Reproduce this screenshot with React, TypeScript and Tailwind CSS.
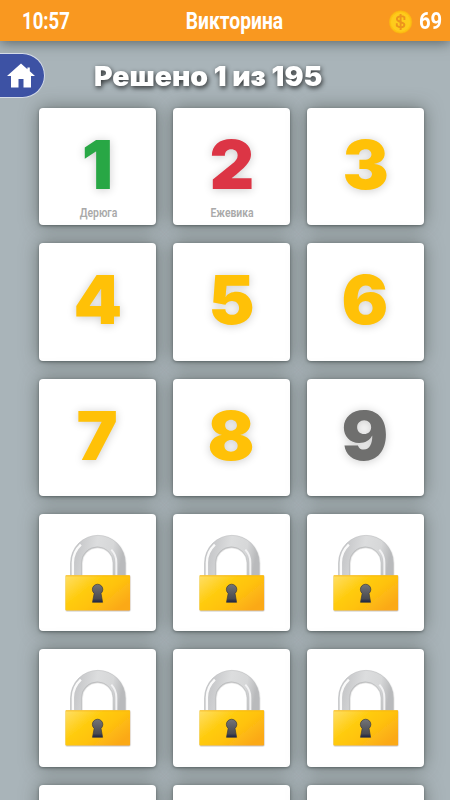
import React from 'react';

type Status = 'solved' | 'failed' | 'open' | 'next' | 'locked';

interface Level {
  id: number;
  status: Status;
  answer?: string;
}

const LEVELS: Level[] = [
  { id: 1, status: 'solved', answer: 'Дерюга' },
  { id: 2, status: 'failed', answer: 'Ежевика' },
  { id: 3, status: 'open' },
  { id: 4, status: 'open' },
  { id: 5, status: 'open' },
  { id: 6, status: 'open' },
  { id: 7, status: 'open' },
  { id: 8, status: 'open' },
  { id: 9, status: 'next' },
  ...Array.from({ length: 9 }, (_, i): Level => ({ id: 10 + i, status: 'locked' })),
];

const COLORS: Record<Status, string> = {
  solved: 'text-[#28a745]',
  failed: 'text-[#dc3545]',
  open: 'text-[#ffc107]',
  next: 'text-[#6f6f6e]',
  locked: '',
};

const LockIcon: React.FC = () => (
  <svg viewBox="0 0 117 117" className="h-full w-full">
    <defs>
      <linearGradient id="shackle" x1="0" x2="1" y1="0" y2="0.15">
        <stop offset="0" stopColor="#cfd0d2" />
        <stop offset="0.15" stopColor="#c6c7c9" />
        <stop offset="0.5" stopColor="#dcddde" />
        <stop offset="0.8" stopColor="#d6d7d8" />
        <stop offset="1" stopColor="#b9babc" />
      </linearGradient>
      <linearGradient id="body" x1="0" x2="1" y1="0" y2="0.7">
        <stop offset="0" stopColor="#ffdf68" />
        <stop offset="0.42" stopColor="#ffcb0b" />
        <stop offset="0.65" stopColor="#ffc20e" />
        <stop offset="1" stopColor="#fba919" />
      </linearGradient>
      <linearGradient id="keyhole" x1="0" x2="0" y1="0" y2="1">
        <stop offset="0" stopColor="#737478" />
        <stop offset="0.8" stopColor="#4a4b50" />
        <stop offset="1" stopColor="#172044" />
      </linearGradient>
      <filter id="lockShadow" x="-10%" y="-10%" width="120%" height="120%">
        <feDropShadow dx="0.3" dy="0.6" stdDeviation="0.7" floodColor="#555" floodOpacity="0.55" />
      </filter>
    </defs>
    <g filter="url(#lockShadow)">
      <path
        d="M31.6 62V48.5a27.2 27.2 0 0 1 54.4 0V62H74V48.5a15.8 15.8 0 0 0-31.6 0V62Z"
        fill="url(#shackle)"
        stroke="#bbbcbe"
        strokeWidth="0.5"
      />
      <path d="M33.8 61V48.5a25 25 0 0 1 8-18" fill="none" stroke="#fafafa" strokeWidth="2.4" />
      <path d="M77.2 61V48.5a18.5 18.5 0 0 0-5-13" fill="none" stroke="#f2f2f3" strokeWidth="2" />
      <rect x="26.3" y="61" width="64.6" height="35.2" rx="0.8" fill="url(#body)" />
      <path d="M26.8 61.7H90.5" stroke="#f6b51d" strokeWidth="0.8" />
    </g>
    <path
      d="M55.1 79.2a5.2 5.2 0 1 1 6.8 0l1.6 8.9H53.4Z"
      fill="url(#keyhole)"
      stroke="#393a40"
      strokeWidth="0.7"
    />
  </svg>
);

const LevelCard: React.FC<{ level: Level }> = ({ level }) => (
  <button className="flex h-[117.3px] w-full flex-col items-center rounded-[4px] bg-white shadow-[0_1px_3px_rgba(40,50,50,0.5),0_0_18px_rgba(60,65,60,0.55)]">
    {level.status === 'locked' ? (
      <LockIcon />
    ) : (
      <>
        <span
          className={`mt-[21px] h-[77px] origin-center scale-x-[1.02] text-[68px] leading-[70px] font-black [text-shadow:0_1px_10px_rgba(0,0,0,0.2)] ${COLORS[level.status]}`}
        >
          {level.id}
        </span>
        {level.answer && (
          <span className="origin-center translate-x-[1px] scale-x-[0.8] font-['Roboto',sans-serif] text-[13px] leading-[14px] font-semibold text-[#a9a9a9]">
            {level.answer}
          </span>
        )}
      </>
    )}
  </button>
);

const TopBar: React.FC = () => (
  <header className="grid h-[41px] shrink-0 grid-cols-3 items-center bg-[#f99820] pt-[3px] pr-[8px] pl-[21px] font-['Roboto',sans-serif] text-[23.5px] leading-none font-bold text-white shadow-[0_2px_12px_rgba(50,60,60,0.65)]">
    <span className="origin-left translate-x-[1px] scale-x-[0.79] justify-self-start">10:57</span>
    <span className="origin-center translate-x-[3px] scale-x-[0.82] justify-self-center">Викторина</span>
    <div className="flex items-center justify-self-end">
      <svg viewBox="0 0 24 24" className="h-6 w-6">
        <circle cx="11.6" cy="12" r="11.3" fill="#fdc113" stroke="#f8ae12" strokeWidth="0.6" />
        <circle cx="11.6" cy="12" r="9.7" fill="#fecb1c" />
        <path
          d="M15.4 10V7.3C12.8 5.3 7.9 6.1 7.9 9.1c0 3.7 7.5 2.2 7.5 5.7 0 3-5 3.2-7.6.9V13.2M11.6 3.9v16"
          fill="none"
          stroke="#ed941c"
          strokeWidth="1.9"
        />
      </svg>
      <span className="-mr-[4px] ml-[6px] origin-left scale-x-[0.86]">69</span>
    </div>
  </header>
);

export default function App() {
  return (
    <div className="flex h-[800px] w-[450px] flex-col overflow-hidden bg-[#a9b4b9] font-['Inter',sans-serif]">
      <TopBar />
      <div className="flex h-[67px] shrink-0 items-start pt-[12px]">
        <button className="flex h-[45px] w-[45px] shrink-0 items-center rounded-r-full border border-l-0 border-[#d5dce8] bg-[#3d52a4] pl-[7px]">
          <svg viewBox="0 0 28 25" className="h-[25px] w-[28px]" fill="#fff">
            <path d="M14 .5 0 13H4V24.5H11.5V16H16.5V24.5H24V13H28L22.8 8.3V4.6H20.4V6.2Z" />
          </svg>
        </button>
        <h1 className="ml-[49px] origin-left scale-x-[1.05] pt-[9px] text-[27px] leading-[30px] font-black whitespace-nowrap text-white [text-shadow:1px_2px_5px_rgba(0,0,0,0.75)]">
          Решено 1 из 195
        </h1>
      </div>
      <main className="grid shrink-0 grid-cols-3 gap-x-[16.7px] gap-y-[18.05px] pr-[26px] pl-[39px]">
        {LEVELS.map((level) => (
          <LevelCard key={level.id} level={level} />
        ))}
      </main>
    </div>
  );
}
